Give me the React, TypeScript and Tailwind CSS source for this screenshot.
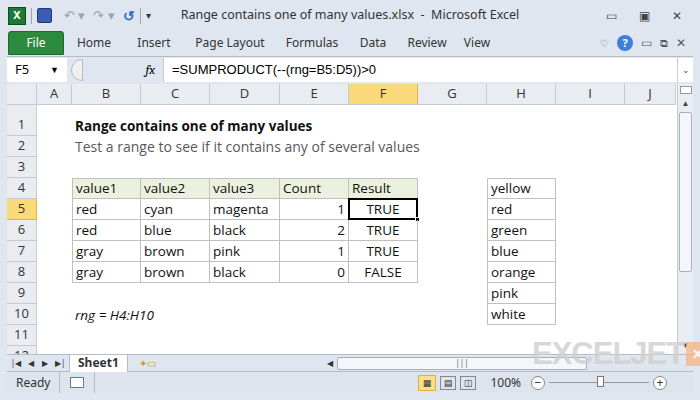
import React from "react";

const cols = [
  { n: "A", w: 35 }, { n: "B", w: 69 }, { n: "C", w: 69 }, { n: "D", w: 70 }, { n: "E", w: 69 },
  { n: "F", w: 69 }, { n: "G", w: 69 }, { n: "H", w: 69 }, { n: "I", w: 69 }, { n: "J", w: 51 },
];

const hdr = ["value1", "value2", "value3", "Count", "Result"];
const data = [
  ["red", "cyan", "magenta", "1", "TRUE"],
  ["red", "blue", "black", "2", "TRUE"],
  ["gray", "brown", "pink", "1", "TRUE"],
  ["gray", "brown", "black", "0", "FALSE"],
];
const hl = ["yellow", "red", "green", "blue", "orange", "pink", "white"];

function cellInfo(r: number, c: string) {
  const ci = "BCDEF".indexOf(c);
  let text = "";
  let box = false, bg = "", align = "text-left", extra = "";
  if (r === 1 && c === "B") { text = "Range contains one of many values"; extra = "font-bold"; }
  if (r === 2 && c === "B") { text = "Test a range to see if it contains any of several values"; extra = "text-[#595959] text-[14px]"; }
  if (r === 10 && c === "B") { text = "rng = H4:H10"; extra = "italic"; }
  if (ci >= 0 && r >= 4 && r <= 8) {
    box = true;
    if (r === 4) { text = hdr[ci]; bg = "bg-[#ebf1de]"; }
    else {
      text = data[r - 5][ci];
      if (ci === 3) align = "text-right";
      if (ci === 4) align = "text-center";
    }
  }
  if (c === "H" && r >= 4 && r <= 10) { box = true; text = hl[r - 4]; }
  return { text, box, bg, align, extra };
}

export default function App() {
  const rows = [1, 2, 3, 4, 5, 6, 7, 8, 9, 10, 11, 12];
  return (
    <div className="w-[700px] h-[400px] bg-[#dfe6ef] overflow-hidden relative" style={{ fontFamily: "'Noto Sans', sans-serif" }}>
      {/* title bar */}
      <div className="h-[31px] flex items-center px-[8px] text-[12px] text-[#1e395b] relative">
        <div className="w-[18px] h-[18px] bg-[#1d7a34] border border-[#0f4d1e] text-white text-[11px] font-bold flex items-center justify-center">X</div>
        <div className="mx-[5px] w-px h-[16px] bg-[#a0a8b4]" />
        <div className="w-[15px] h-[15px] bg-[#3b5bb5] rounded-[2px] border border-[#22377a]" />
        <span className="ml-[12px] text-[#9aa3ad] text-[13px]">↶ ▾</span>
        <span className="ml-[8px] text-[#9aa3ad] text-[13px]">↷ ▾</span>
        <span className="ml-[8px] text-[#2f6fcf] text-[14px] font-bold">↺</span>
        <div className="mx-[5px] w-px h-[16px] bg-[#a0a8b4]" />
        <span className="text-[10px]">▾</span>
        <div className="absolute left-0 right-0 text-center text-[12.5px] text-[#333] pointer-events-none">Range contains one of many values.xlsx&nbsp; -&nbsp; Microsoft Excel</div>
        <div className="ml-auto flex gap-[22px] pr-[10px] text-[#444] text-[12px]">
          <span>▭</span><span>▣</span><span>✕</span>
        </div>
      </div>
      {/* ribbon tabs */}
      <div className="h-[24px] flex items-end text-[12px] text-[#333] pl-[8px]">
        <div className="w-[56px] h-[24px] bg-[#2b8a3e] text-white rounded-t-[3px] flex items-center justify-center border border-[#1d6b2c]">File</div>
        {[["Home", 60], ["Insert", 60], ["Page Layout", 92], ["Formulas", 72], ["Data", 50], ["Review", 58], ["View", 42]].map(([t, w]) => (
          <div key={t as string} style={{ width: w as number }} className="h-[24px] flex items-center justify-center">{t}</div>
        ))}
        <div className="ml-auto flex items-center gap-[8px] pr-[14px] h-[24px] text-[#555]">
          <span className="text-[10px]">♡</span>
          <span className="w-[16px] h-[16px] rounded-full bg-[#3d7fdb] text-white text-[11px] font-bold flex items-center justify-center">?</span>
          <span>▭</span><span className="text-[11px]">⧉</span><span>✕</span>
        </div>
      </div>
      {/* formula bar */}
      <div className="mx-[7px] mt-[1px] h-[26px] bg-[#dfe6ef] flex items-center border-t border-[#b6bcc6]">
        <div className="w-[60px] h-[24px] bg-white flex items-center justify-between px-[8px] text-[13px] text-black">F5<span className="text-[9px]">▼</span></div>
        <div className="w-[12px] h-[22px] ml-[4px] rounded-l-full border border-[#b6bcc6] bg-[#f0f0f0]" />
        <div className="w-[80px] flex justify-end pr-[8px] text-[13px] italic font-serif">fx</div>
        <div className="flex-1 h-[24px] bg-white border-l border-[#c6cbd3] flex items-center pl-[8px] text-[13px] text-black" style={{ fontFamily: "'Liberation Sans', sans-serif" }}>=SUMPRODUCT(--(rng=B5:D5))&gt;0</div>
        <div className="w-[16px] h-[24px] bg-white border-l border-[#c6cbd3] text-[9px] text-[#555] flex items-center justify-center">⌄</div>
      </div>
      {/* grid */}
      <div className="mx-[7px] mt-[2px] flex h-[270px] bg-white overflow-hidden" style={{ fontFamily: "'Open Sans', 'Liberation Sans', sans-serif" }}>
        <div className="flex flex-col overflow-hidden">
          <div className="flex h-[21px] shrink-0 bg-[#e9edf2] border-b border-[#c6cbd3] text-[13px] text-[#333]">
            <div className="w-[30px] border-r border-[#c6cbd3]" />
            {cols.map((c) => (
              <div key={c.n} style={{ width: c.w }} className={`border-r flex items-center justify-center ${c.n === "F" ? "bg-[#f9d97a] border-[#e2b344]" : "border-[#c6cbd3]"}`}>{c.n}</div>
            ))}
          </div>
          {rows.map((r) => (
            <div key={r} className={`flex ${r === 1 ? "h-[31px]" : "h-[21px]"} text-[13.5px] text-[#111] shrink-0`}>
              <div className={`w-[30px] border-r border-b flex items-end pb-[1px] justify-center text-[13px] text-[#333] ${r === 5 ? "bg-[#f9d97a] border-[#e2b344]" : "bg-[#e9edf2] border-[#c6cbd3]"}`}>{r}</div>
              {cols.map((c) => {
                const i = cellInfo(r, c.n);
                const sel = r === 5 && c.n === "F";
                return (
                  <div key={c.n} style={{ width: c.w }} className={`relative shrink-0 flex items-end ${i.box ? "border-r border-b border-[#c0c0c0]" : ""} ${i.box && (c.n === "B" || c.n === "H") ? "border-l" : ""} ${i.box && (r === 4) ? "border-t" : ""} ${i.bg}`}>
                    {i.text && (
                      <span className={`px-[3px] w-full whitespace-nowrap leading-[20px] ${i.align} ${i.extra}`}>{i.text}</span>
                    )}
                    {sel && <div className="absolute inset-[-1px] border-2 border-black"><div className="absolute right-[-4px] bottom-[-4px] w-[5px] h-[5px] bg-black border border-white" /></div>}
                  </div>
                );
              })}
            </div>
          ))}
        </div>
        <div className="w-[16px] ml-auto bg-[#e9edf2] border-l border-[#c6cbd3] flex flex-col items-center text-[8px] text-[#444]">
          <div className="h-[8px] w-[12px] border border-[#999] mt-[2px] bg-white" />
          <div className="mt-[3px]">▲</div>
          <div className="w-[13px] h-[160px] mt-[3px] bg-[#f4f6f9] border border-[#a7b0bd] rounded-[2px]" />
          <div className="mt-auto mb-[3px]">▼</div>
        </div>
      </div>
      {/* sheet tabs */}
      <div className="mx-[7px] h-[17px] flex items-center text-[12px] bg-[#dfe6ef] border-t border-[#b6bcc6]">
        <div className="w-[62px] flex justify-around text-[8px] text-[#333]"><span>|◀</span><span>◀</span><span>▶</span><span>▶|</span></div>
        <div className="h-[17px] px-[8px] bg-white font-bold text-[#333] flex items-center border-x border-[#b6bcc6]">Sheet1</div>
        <div className="w-[40px] text-[10px] text-center text-[#c89a2b]">✦▭</div>
        <div className="ml-auto flex items-center">
          <div className="w-[14px] text-[8px] text-center text-[#333]">◀</div>
          <div className="w-[250px] h-[13px] bg-[#f4f6f9] border border-[#a7b0bd] rounded-[2px] flex items-center justify-center text-[8px] text-[#666]">|||</div>
          <div className="w-[90px]" />
          <div className="w-[16px]" />
        </div>
      </div>
      <div className="absolute left-[532px] top-[338px] flex items-center pointer-events-none">
        <span className="text-[31px] leading-none font-black text-[#cfcfcf] opacity-80 tracking-[-1px]" style={{ fontFamily: "'Liberation Sans', sans-serif" }}>EXCELJET</span>
        <div className="w-[24px] h-[24px] ml-[2px] bg-[#f3b98a] opacity-80 flex items-center justify-center text-white text-[14px] font-bold">✕</div>
      </div>
      {/* status bar */}
      <div className="mx-[7px] h-[22px] flex items-center text-[12px] text-[#333] bg-[#dde4ee] border-t border-[#b6bcc6]">
        <div className="px-[9px] border-r border-[#b6bcc6] h-full flex items-center">Ready</div>
        <div className="px-[10px] border-r border-[#b6bcc6] h-full flex items-center"><div className="w-[14px] h-[11px] border border-[#5a7bb5] bg-white" /></div>
        <div className="ml-auto flex items-center gap-[4px] h-full">
          <div className="w-[18px] h-[16px] bg-[#fbe08b] border border-[#e3b03c] text-[9px] flex items-center justify-center">▦</div>
          <div className="w-[16px] h-[14px] border border-[#888] text-[9px] flex items-center justify-center">▤</div>
          <div className="w-[16px] h-[14px] border border-[#888] text-[9px] flex items-center justify-center">◫</div>
          <span className="ml-[10px] text-[12px]">100%</span>
          <span className="ml-[6px] w-[14px] h-[14px] rounded-full border border-[#888] bg-white flex items-center justify-center text-[12px] leading-none">−</span>
          <div className="w-[100px] h-px bg-[#999] relative"><div className="absolute left-[48px] top-[-6px] w-[7px] h-[11px] bg-white border border-[#777]" /></div>
          <span className="w-[14px] h-[14px] rounded-full border border-[#888] bg-white flex items-center justify-center text-[12px] leading-none">+</span>
          <span className="w-[22px]" />
        </div>
      </div>
    </div>
  );
}
